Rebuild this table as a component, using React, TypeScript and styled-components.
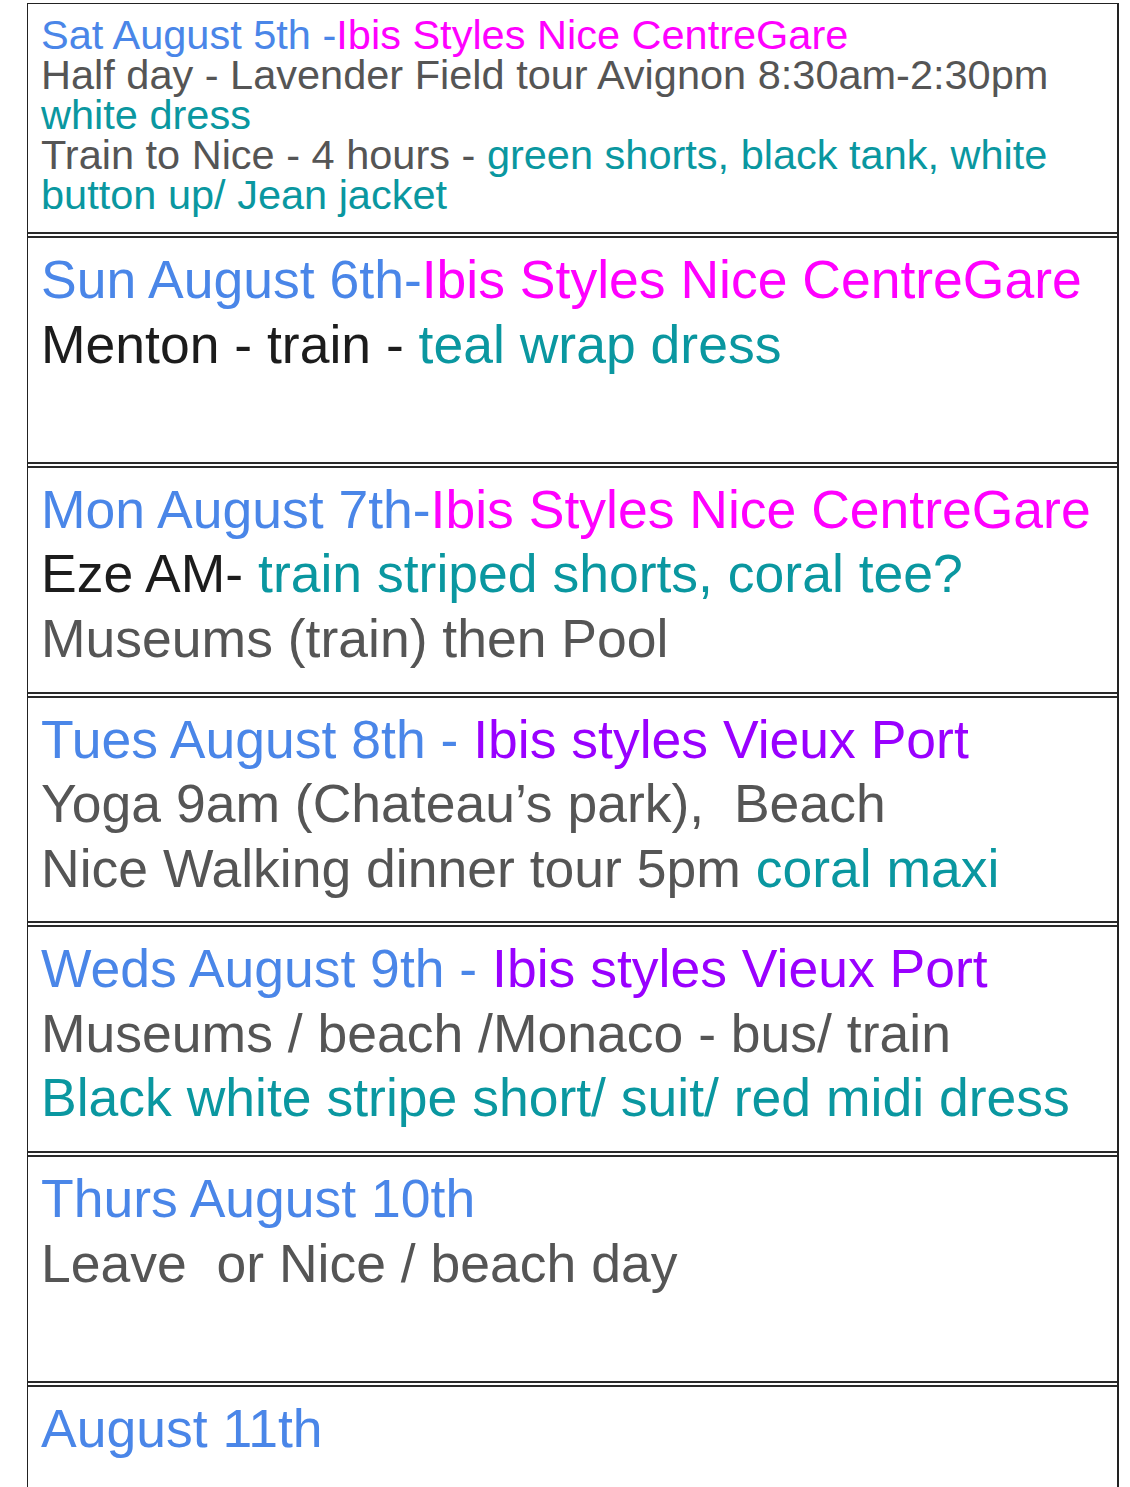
import React from 'react'
import styled, { createGlobalStyle } from 'styled-components'

const GlobalStyle = createGlobalStyle`
	html, body {
		margin: 0;
		padding: 0;
		background: #ffffff;
	}
	body {
		font-family: 'Liberation Sans', Arial, sans-serif;
	}
`

const Page = styled.div`
	padding: 3px 0 0 27px;
	width: 1092px;
`

const Table = styled.div`
	border-top: 1px solid #222;
	border-left: 1px solid #222;
	border-right: 2px solid #222;
	display: flex;
	flex-direction: column;
`

const Row = styled.div<{ $first?: boolean }>`
	box-sizing: border-box;
	flex: none;
	height: ${(p) => (p.$first ? '228px' : '229.8px')};
	border-top: ${(p) => (p.$first ? 'none' : '6px double #2a2a2a')};
	padding: ${(p) => (p.$first ? '11px' : '10px')} 10px 0 13px;
	display: flex;
	flex-direction: column;
`

const Line = styled.div<{ $small?: boolean }>`
	font-size: ${(p) => (p.$small ? '41.5px' : '53.5px')};
	line-height: ${(p) => (p.$small ? '40px' : '64.5px')};
	white-space: pre;
	color: #555555;
`

const Span = styled.span<{ $tone: 'blue' | 'magenta' | 'purple' | 'teal' | 'gray' | 'black' }>`
	color: ${(p) =>
		({
			blue: '#4a86e8',
			magenta: '#ff00ff',
			purple: '#9900ff',
			teal: '#0a97a0',
			gray: '#555555',
			black: '#1c1c1c',
		})[p.$tone]};
`

const App: React.FC = () => {
	return (
		<>
			<GlobalStyle />
			<Page>
				<Table>
					<Row $first>
						<Line $small>
							<Span $tone="blue">Sat August 5th -</Span>
							<Span $tone="magenta">Ibis Styles Nice CentreGare</Span>
						</Line>
						<Line $small>Half day - Lavender Field tour Avignon 8:30am-2:30pm</Line>
						<Line $small>
							<Span $tone="teal">white dress</Span>
						</Line>
						<Line $small>
							Train to Nice - 4 hours - <Span $tone="teal">green shorts, black tank, white</Span>
						</Line>
						<Line $small>
							<Span $tone="teal">button up/ Jean jacket</Span>
						</Line>
					</Row>

					<Row>
						<Line>
							<Span $tone="blue">Sun August 6th-</Span>
							<Span $tone="magenta">Ibis Styles Nice CentreGare</Span>
						</Line>
						<Line>
							<Span $tone="black">Menton - train - </Span>
							<Span $tone="teal">teal wrap dress</Span>
						</Line>
					</Row>

					<Row>
						<Line>
							<Span $tone="blue">Mon August 7th-</Span>
							<Span $tone="magenta">Ibis Styles Nice CentreGare</Span>
						</Line>
						<Line>
							<Span $tone="black">Eze AM- </Span>
							<Span $tone="teal">train striped shorts, coral tee?</Span>
						</Line>
						<Line>Museums (train) then Pool</Line>
					</Row>

					<Row>
						<Line>
							<Span $tone="blue">Tues August 8th - </Span>
							<Span $tone="purple">Ibis styles Vieux Port</Span>
						</Line>
						<Line>{'Yoga 9am (Chateau’s park),  Beach'}</Line>
						<Line>
							Nice Walking dinner tour 5pm <Span $tone="teal">coral maxi</Span>
						</Line>
					</Row>

					<Row>
						<Line>
							<Span $tone="blue">Weds August 9th - </Span>
							<Span $tone="purple">Ibis styles Vieux Port</Span>
						</Line>
						<Line>Museums / beach /Monaco - bus/ train</Line>
						<Line>
							<Span $tone="teal">Black white stripe short/ suit/ red midi dress</Span>
						</Line>
					</Row>

					<Row>
						<Line>
							<Span $tone="blue">Thurs August 10th</Span>
						</Line>
						<Line>{'Leave  or Nice / beach day'}</Line>
					</Row>

					<Row>
						<Line>
							<Span $tone="blue">August 11th</Span>
						</Line>
					</Row>
				</Table>
			</Page>
		</>
	)
}

export default App
